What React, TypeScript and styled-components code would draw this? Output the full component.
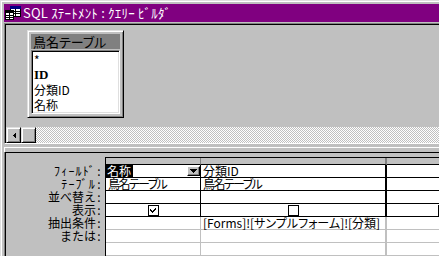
import React from 'react';
import styled, { createGlobalStyle } from 'styled-components';

const GlobalStyle = createGlobalStyle`
  html, body { margin: 0; padding: 0; background: #c0c0c0; }
  body {
    width: 439px; height: 256px; overflow: hidden;
    font-family: "Noto Sans CJK JP", "Noto Sans", sans-serif;
    font-size: 12px;
    color: #000;
  }
  * { box-sizing: border-box; }
`;

const Window = styled.div`
  width: 439px;
  height: 256px;
  background: #c0c0c0;
  border-top: 1px solid #dfdfdf;
  border-left: 1px solid #dfdfdf;
  box-shadow: inset 1px 1px 0 #fff;
  padding: 3px 0 0 3px;
  display: flex;
  flex-direction: column;
  overflow: hidden;
`;

const TitleBar = styled.div`
  height: 18px;
  flex: none;
  background: #800080;
  display: flex;
  align-items: center;
  padding-left: 1px;
  gap: 2px;
  color: #fff;
  font-size: 13px;
  line-height: 18px;
  white-space: nowrap;
`;

const TitleText = styled.span`
  letter-spacing: 0.2px;
`;

const Client = styled.div`
  margin-top: 1px;
  flex: 1;
  display: flex;
  flex-direction: column;
  min-height: 0;
`;

const UpperPane = styled.div`
  height: 121px;
  flex: none;
  border-top: 1px solid #808080;
  border-left: 1px solid #808080;
  border-bottom: 1px solid #fff;
`;

const UpperInner = styled.div`
  height: 100%;
  border-top: 1px solid #000;
  border-left: 1px solid #000;
  display: flex;
  flex-direction: column;
`;

const Canvas = styled.div`
  flex: 1;
  padding: 5px 0 0 21px;
`;

const TableBox = styled.div`
  width: 97px;
  height: 88px;
  background: #c0c0c0;
  border-style: solid;
  border-width: 1px;
  border-color: #dfdfdf #000 #000 #dfdfdf;
  box-shadow: inset 1px 1px 0 #fff, inset -1px -1px 0 #808080;
  padding: 3px;
  display: flex;
  flex-direction: column;
`;

const TableHeader = styled.div`
  height: 15px;
  flex: none;
  background: #808080;
  color: #000;
  font-size: 13px;
  font-feature-settings: "palt";
  line-height: 15px;
  padding-left: 2px;
  white-space: nowrap;
`;

const FieldList = styled.div`
  margin-top: 1px;
  flex: 1;
  background: #fff;
  border-style: solid;
  border-width: 1px;
  border-color: #808080 #fff #fff #808080;
  box-shadow: inset 1px 1px 0 #000, inset -1px -1px 0 #dfdfdf;
  padding: 1px 0 0 2px;
`;

const FieldItem = styled.div<{ $bold?: boolean }>`
  height: 15px;
  line-height: 15px;
  font-weight: ${p => (p.$bold ? 700 : 400)};
  font-family: ${p => (p.$bold ? '"Liberation Serif", serif' : 'inherit')};
  font-size: ${p => (p.$bold ? '13px' : '12px')};
  white-space: nowrap;
`;

const HScroll = styled.div`
  height: 16px;
  flex: none;
  display: flex;
`;

const ScrollButton = styled.div`
  width: 15px;
  height: 16px;
  flex: none;
  background: #c0c0c0;
  border-style: solid;
  border-width: 1px;
  border-color: #dfdfdf #000 #000 #dfdfdf;
  box-shadow: inset 1px 1px 0 #fff, inset -1px -1px 0 #808080;
  display: flex;
  align-items: center;
  justify-content: center;
`;

const ScrollTrack = styled.div`
  flex: 1;
  background: repeating-conic-gradient(#c0c0c0 0 25%, #fff 0 50%) 0 0 / 2px 2px;
`;

const Gap = styled.div`
  height: 3px;
  flex: none;
`;

const Splitter = styled.div`
  height: 6px;
  flex: none;
  background: #c0c0c0;
  border-top: 1px solid #fff;
  border-left: 1px solid #fff;
  border-bottom: 1px solid #000;
`;

const LowerPane = styled.div`
  flex: 1;
  min-height: 0;
  border-left: 1px solid #808080;
`;

const LowerInner = styled.div`
  height: 100%;
  border-left: 1px solid #000;
  padding-top: 4px;
  display: flex;
`;

const Labels = styled.div`
  width: 99px;
  flex: none;
  padding-top: 8px;
  display: flex;
  flex-direction: column;
`;

const Label = styled.div`
  height: 13px;
  line-height: 12px;
  display: flex;
  justify-content: flex-end;
  align-items: flex-start;
  white-space: nowrap;
  padding-right: 3px;
`;

const LabelText = styled.span<{ $half?: boolean }>`
  letter-spacing: ${p => (p.$half ? '1.2px' : '0')};
`;

const Colon = styled.span`
  width: 6px;
  text-align: center;
`;

const Grid = styled.div`
  flex: none;
  border-top: 1px solid #000;
  border-left: 1px solid #000;
  display: flex;
  flex-direction: column;
`;

const Row = styled.div`
  display: flex;
`;

const HeaderCell = styled.div<{ $w: number; $thick?: boolean }>`
  width: ${p => p.$w}px;
  height: 7px;
  background: #c0c0c0;
  border-bottom: 1px solid #000;
  border-right: ${p => (p.$thick ? '2px' : '1px')} solid #808080;
  flex: none;
`;

const Cell = styled.div<{ $w: number; $line: string; $thick?: boolean; $center?: boolean }>`
  width: ${p => p.$w}px;
  height: 13px;
  flex: none;
  background: #fff;
  border-bottom: 1px solid ${p => p.$line};
  border-right: ${p => (p.$thick ? '2px' : '1px')} solid ${p => p.$line};
  line-height: 12px;
  white-space: nowrap;
  display: flex;
  align-items: center;
  justify-content: ${p => (p.$center ? 'center' : 'flex-start')};
`;

const Selected = styled.span`
  background: #000;
  color: #fff;
  padding: 0 2px 0 1px;
  line-height: 12px;
`;

const ComboButton = styled.div`
  margin-left: auto;
  width: 13px;
  height: 10px;
  background: #c0c0c0;
  border-style: solid;
  border-width: 1px;
  border-color: #fff #000 #000 #fff;
  box-shadow: inset -1px -1px 0 #808080;
  display: flex;
  align-items: center;
  justify-content: center;
`;

const CheckBox = styled.div`
  width: 11px;
  height: 11px;
  border: 1px solid #000;
  background: #fff;
  display: flex;
  align-items: center;
  justify-content: center;
`;

const CellText = styled.span<{ $tight?: number }>`
  padding-left: 2px;
  font-feature-settings: "palt";
  letter-spacing: ${p => p.$tight ?? 0}px;
`;

const TitleIcon = () => (
  <svg width="16" height="15" viewBox="0 0 16 15" shapeRendering="crispEdges">
    <rect x="5.5" y="0.5" width="10" height="10" fill="#fff" stroke="#000" />
    <rect x="5" y="0" width="11" height="3" fill="#000080" />
    <line x1="6" y1="5.5" x2="15" y2="5.5" stroke="#000" />
    <line x1="6" y1="7.5" x2="15" y2="7.5" stroke="#000" />
    <line x1="10.5" y1="3" x2="10.5" y2="10" stroke="#000" />
    <rect x="0.5" y="4.5" width="8" height="9" fill="#fff" stroke="#000" />
    <rect x="0" y="4" width="9" height="3" fill="#000" />
    <line x1="1" y1="9.5" x2="8" y2="9.5" stroke="#000" />
    <line x1="1" y1="11.5" x2="8" y2="11.5" stroke="#000" />
    <line x1="4.5" y1="7" x2="4.5" y2="13" stroke="#000" />
  </svg>
);

const LeftArrow = () => (
  <svg width="4" height="7" viewBox="0 0 4 7" shapeRendering="crispEdges">
    <path d="M4 0 L4 7 L0.5 3.5 Z" fill="#000" />
  </svg>
);

const DownArrow = () => (
  <svg width="7" height="4" viewBox="0 0 7 4" shapeRendering="crispEdges">
    <path d="M0 0 H7 L3.5 4 Z" fill="#000" />
  </svg>
);

const CheckMark = () => (
  <svg width="9" height="9" viewBox="0 0 9 9" shapeRendering="crispEdges">
    <path d="M1 3 L3 5 L7 1 L7 3 L3 7 L1 5 Z" fill="#000" />
  </svg>
);

const COLS = [94, 184, 112];

const labels: { text: string; half?: boolean }[] = [
  { text: 'ﾌｨｰﾙﾄﾞ', half: true },
  { text: 'ﾃｰﾌﾞﾙ', half: true },
  { text: '並べ替え' },
  { text: '表示' },
  { text: '抽出条件' },
  { text: 'または' },
];

const rows: React.ReactNode[][] = [
  [
    <>
      <Selected>名称</Selected>
      <ComboButton><DownArrow /></ComboButton>
    </>,
    <CellText>分類ID</CellText>,
    null,
  ],
  [<CellText $tight={-1.6}>鳥名テーブル</CellText>, <CellText $tight={-1.6}>鳥名テーブル</CellText>, null],
  [null, null, null],
  [
    <CheckBox><CheckMark /></CheckBox>,
    <CheckBox />,
    <CheckBox />,
  ],
  [null, <CellText>[Forms]![サンプルフォーム]![分類]</CellText>, null],
  [null, null, null],
  [null, null, null],
];

export default function App() {
  return (
    <>
      <GlobalStyle />
      <Window>
        <TitleBar>
          <TitleIcon />
          <TitleText>SQL ｽﾃｰﾄﾒﾝﾄ : ｸｴﾘｰ ﾋﾞﾙﾀﾞ</TitleText>
        </TitleBar>
        <Client>
          <UpperPane>
            <UpperInner>
              <Canvas>
                <TableBox>
                  <TableHeader>鳥名テーブル</TableHeader>
                  <FieldList>
                    <FieldItem>*</FieldItem>
                    <FieldItem $bold>ID</FieldItem>
                    <FieldItem>分類ID</FieldItem>
                    <FieldItem>名称</FieldItem>
                  </FieldList>
                </TableBox>
              </Canvas>
              <HScroll>
                <ScrollButton><LeftArrow /></ScrollButton>
                <ScrollButton />
                <ScrollTrack />
              </HScroll>
            </UpperInner>
          </UpperPane>
          <Gap />
          <Splitter />
          <LowerPane>
            <LowerInner>
              <Labels>
                {labels.map(l => (
                  <Label key={l.text}>
                    <LabelText $half={l.half}>{l.text}</LabelText>
                    <Colon>:</Colon>
                  </Label>
                ))}
              </Labels>
              <Grid>
                <Row>
                  {COLS.map((w, i) => (
                    <HeaderCell key={i} $w={w + (i === 1 ? 2 : 1)} $thick={i === 1} />
                  ))}
                </Row>
                {rows.map((r, ri) => (
                  <Row key={ri}>
                    {r.map((c, ci) => (
                      <Cell
                        key={ci}
                        $w={COLS[ci] + (ci === 1 ? 2 : 1)}
                        $thick={ci === 1}
                        $line={ri < 4 ? '#000' : '#c0c0c0'}
                        $center={ri === 3}
                      >
                        {c}
                      </Cell>
                    ))}
                  </Row>
                ))}
              </Grid>
            </LowerInner>
          </LowerPane>
        </Client>
      </Window>
    </>
  );
}
